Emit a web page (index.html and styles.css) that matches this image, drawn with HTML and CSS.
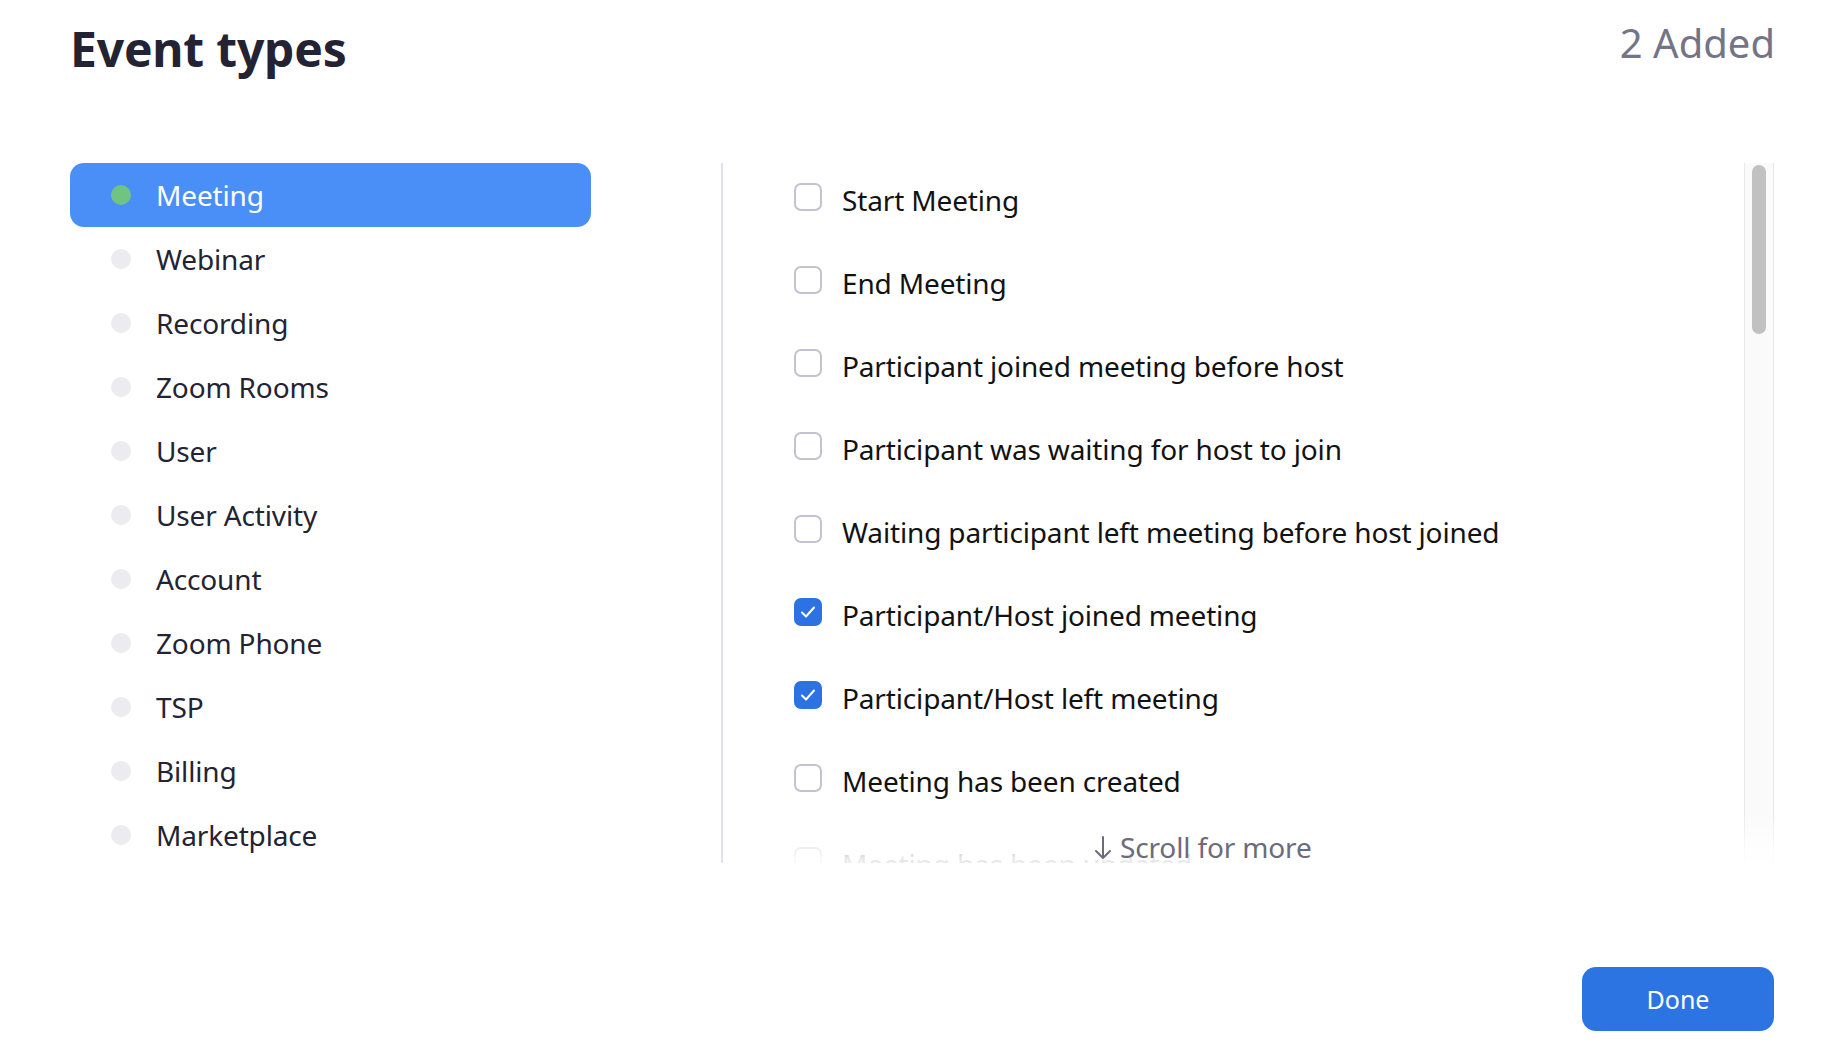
FILE: index.html
```html
<!DOCTYPE html>
<html lang="en">
<head>
<meta charset="utf-8">
<title>Event types</title>
<link rel="stylesheet" href="styles.css">
</head>
<body>
<div class="modal">
  <header class="head">
    <h1 class="title">Event types</h1>
    <div class="count">2 Added</div>
  </header>
  <div class="main">
    <nav class="cats">
      <ul class="cat-list">
        <li class="cat active"><span class="dot"></span><span class="label">Meeting</span></li>
        <li class="cat"><span class="dot"></span><span class="label">Webinar</span></li>
        <li class="cat"><span class="dot"></span><span class="label">Recording</span></li>
        <li class="cat"><span class="dot"></span><span class="label">Zoom Rooms</span></li>
        <li class="cat"><span class="dot"></span><span class="label">User</span></li>
        <li class="cat"><span class="dot"></span><span class="label">User Activity</span></li>
        <li class="cat"><span class="dot"></span><span class="label">Account</span></li>
        <li class="cat"><span class="dot"></span><span class="label">Zoom Phone</span></li>
        <li class="cat"><span class="dot"></span><span class="label">TSP</span></li>
        <li class="cat"><span class="dot"></span><span class="label">Billing</span></li>
        <li class="cat"><span class="dot"></span><span class="label">Marketplace</span></li>
      </ul>
    </nav>
    <section class="events">
      <div class="event-list">
        <div class="event"><span class="box"></span><span class="ev-label">Start Meeting</span></div>
        <div class="event"><span class="box"></span><span class="ev-label">End Meeting</span></div>
        <div class="event"><span class="box"></span><span class="ev-label">Participant joined meeting before host</span></div>
        <div class="event"><span class="box"></span><span class="ev-label">Participant was waiting for host to join</span></div>
        <div class="event"><span class="box"></span><span class="ev-label">Waiting participant left meeting before host joined</span></div>
        <div class="event"><span class="box on"><svg class="tick" viewBox="0 0 28 28" width="28" height="28"><polyline points="8,14.5 12,18.5 20,9.5" fill="none" stroke="#fff" stroke-width="2" stroke-linecap="round" stroke-linejoin="round"/></svg></span><span class="ev-label">Participant/Host joined meeting</span></div>
        <div class="event"><span class="box on"><svg class="tick" viewBox="0 0 28 28" width="28" height="28"><polyline points="8,14.5 12,18.5 20,9.5" fill="none" stroke="#fff" stroke-width="2" stroke-linecap="round" stroke-linejoin="round"/></svg></span><span class="ev-label">Participant/Host left meeting</span></div>
        <div class="event"><span class="box"></span><span class="ev-label">Meeting has been created</span></div>
        <div class="event"><span class="box"></span><span class="ev-label">Meeting has been updated</span></div>
      </div>
      <div class="track"><div class="thumb"></div></div>
      <div class="fade"></div>
      <div class="more"><svg class="arrow" viewBox="0 0 20 26" width="20" height="26"><path d="M10 2 V23 M3 16 L10 23 L17 16" fill="none" stroke="#6b6b7b" stroke-width="2" stroke-linecap="round" stroke-linejoin="round"/></svg><span>Scroll for more</span></div>
    </section>
  </div>
  <footer class="foot">
    <button class="done" type="button">Done</button>
  </footer>
</div>
</body>
</html>
```

FILE: styles.css
```css
html, body {
  margin: 0;
  padding: 0;
  background: #ffffff;
}

body {
  font-family: "Noto Sans", "Open Sans", sans-serif;
}

.modal {
  padding: 0 58px 0 70px;
}

.head {
  display: flex;
  justify-content: space-between;
  align-items: flex-start;
  height: 163px;
  box-sizing: border-box;
  padding-top: 19px;
}

.title {
  margin: 6px 0 0 0;
  font-size: 48px;
  line-height: 48px;
  font-weight: 700;
  color: #232333;
  letter-spacing: -0.2px;
}

.count {
  font-size: 40px;
  line-height: 48px;
  font-weight: 400;
  color: #747487;
  margin-right: -1px;
}

.main {
  display: flex;
  height: 700px;
}

.cats {
  width: 651px;
  flex: none;
}

.cat-list {
  list-style: none;
  margin: 0;
  padding: 0;
}

.cat {
  width: 521px;
  height: 64px;
  box-sizing: border-box;
  display: flex;
  align-items: center;
  padding-left: 41px;
  border-radius: 14px;
  font-size: 28px;
  letter-spacing: -0.15px;
  color: #232333;
}

.dot {
  width: 20px;
  height: 20px;
  border-radius: 50%;
  background: #ebebf0;
  margin-right: 25px;
  flex: none;
}

.cat.active {
  background: #4a8ff7;
  color: #ffffff;
}

.cat.active .dot {
  background: #6fc481;
}

.events {
  flex: 1;
  position: relative;
  display: flex;
  border-left: 2px solid #e1e2ee;
  overflow: hidden;
}

.event-list {
  flex: 1;
  padding-left: 71px;
}

.event {
  height: 83px;
  box-sizing: border-box;
  padding-top: 18px;
  display: flex;
  align-items: flex-start;
  gap: 20px;
  font-size: 28px;
  line-height: 38px;
  letter-spacing: -0.15px;
  color: #121212;
  white-space: nowrap;
}

.box {
  width: 28px;
  height: 28px;
  box-sizing: border-box;
  border: 2px solid #c3c2d2;
  border-radius: 7px;
  margin-top: 2px;
  flex: none;
  position: relative;
}

.box.on {
  background: #2d72e3;
  border-color: #2d72e3;
}

.tick {
  position: absolute;
  left: -2px;
  top: -2px;
  display: block;
}

.track {
  width: 30px;
  flex: none;
  box-sizing: border-box;
  background: #fafafa;
  border-left: 1px solid #e8e8e8;
  border-right: 1px solid #e8e8e8;
  padding: 2px 7px;
}

.thumb {
  height: 169px;
  background: #c1c1c1;
  border-radius: 8px;
}

.fade {
  position: absolute;
  left: 0;
  right: 0;
  bottom: 0;
  height: 52px;
  background: linear-gradient(rgba(255, 255, 255, 0), rgba(255, 255, 255, 0.9) 90%);
}

.more {
  position: absolute;
  top: 665px;
  left: 370px;
  display: flex;
  align-items: center;
  gap: 7px;
  font-size: 28px;
  line-height: 38px;
  letter-spacing: -0.15px;
  color: #6b6b7b;
}

.arrow {
  display: block;
  margin-top: 2px;
}

.foot {
  display: flex;
  justify-content: flex-end;
  margin-top: 104px;
}

.done {
  width: 192px;
  height: 64px;
  border: none;
  border-radius: 14px;
  background: #2d74e3;
  color: #ffffff;
  font-family: "Noto Sans", "Open Sans", sans-serif;
  font-size: 25px;
  padding: 0;
}
```
